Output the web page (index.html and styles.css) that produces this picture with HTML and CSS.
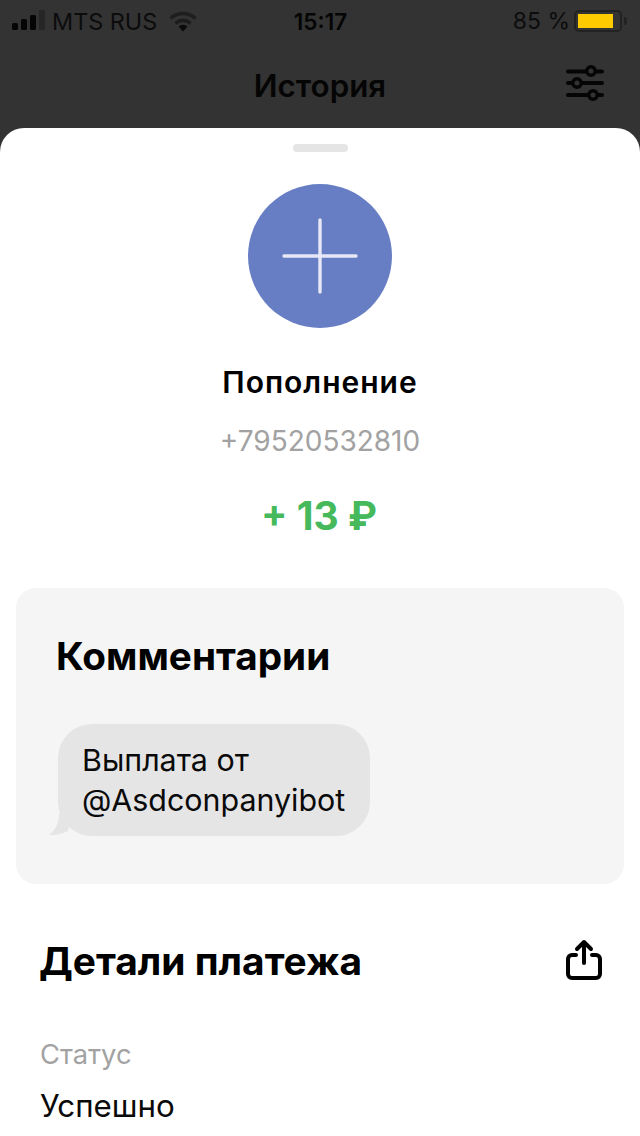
FILE: index.html
```html
<!DOCTYPE html>
<html lang="ru">
<head>
<meta charset="utf-8">
<title>История</title>
<link rel="stylesheet" href="styles.css">
</head>
<body>
<div class="screen">
  <header class="top">
    <div class="status">
      <div class="status-left">
        <svg class="signal" width="34" height="20" viewBox="0 0 34 20"><rect x="0" y="13" width="6" height="7" rx="1.500" fill="#050505"/><rect x="9" y="9" width="6" height="11" rx="1.500" fill="#050505"/><rect x="18" y="5" width="6" height="15" rx="1.500" fill="#050505"/><rect x="27" y="0" width="6" height="20" rx="1.500" fill="#262626"/></svg>
        <span class="carrier">MTS RUS</span>
        <svg class="wifi" width="28" height="21" viewBox="0 0 28 21"><path d="M1.500 7.500a18 18 0 0 1 25 0" fill="none" stroke="#1e1e1e" stroke-width="3.400"/><path d="M6.500 12.500a11 11 0 0 1 15 0" fill="none" stroke="#1c1c1c" stroke-width="3.400"/><path d="M9.500 15.500a6.500 6.500 0 0 1 9 0L14 20.500z" fill="#0a0a0a"/></svg>
      </div>
      <div class="clock">15:17</div>
      <div class="status-right">
        <span class="percent">85 %</span>
        <div class="battery"><div class="battery-fill"></div></div>
        <div class="battery-cap"></div>
      </div>
    </div>
    <div class="nav">
      <h1 class="nav-title">История</h1>
      <svg class="filter" width="38" height="36" viewBox="0 0 38 36"><g fill="none" stroke="#050505"><path d="M2 6.500h34M2 18h34M2 30h34" stroke-width="4" stroke-linecap="round"/><circle cx="25" cy="6" r="4.200" fill="#333" stroke-width="3.400"/><circle cx="11" cy="18" r="4.200" fill="#333" stroke-width="3.400"/><circle cx="27" cy="30" r="4.200" fill="#333" stroke-width="3.400"/></g></svg>
    </div>
  </header>
  <main class="sheet">
    <div class="handle"></div>
    <div class="avatar">
      <svg width="76" height="78" viewBox="0 0 76 78"><path d="M2 39h72M38 3v72" stroke="#e6e9f5" stroke-width="3.400" stroke-linecap="round"/></svg>
    </div>
    <div class="op-title">Пополнение</div>
    <div class="phone">+79520532810</div>
    <div class="amount">+ 13 ₽</div>
    <section class="comments">
      <h2 class="comments-title">Комментарии</h2>
      <div class="bubble">
        <svg class="tail" width="24" height="22" viewBox="0 0 24 22"><path d="M11 0C11 8 8 16 1 21C7 21.500 14 20 20 17L24 0z" fill="#e5e5e5"/></svg>
        <span class="bubble-text">Выплата от<br>@Asdconpanyibot</span>
      </div>
    </section>
    <section class="details">
      <div class="details-head">
        <h2 class="details-title">Детали платежа</h2>
        <svg class="share" width="38" height="44" viewBox="0 0 38 44"><g fill="none" stroke="#000" stroke-width="4" stroke-linecap="round" stroke-linejoin="round"><path d="M11 16H7A4 4 0 0 0 3 20V35A4 4 0 0 0 7 39H31A4 4 0 0 0 35 35V20A4 4 0 0 0 31 16H27"/><path d="M19 24V3M12 10L19 3L26 10"/></g></svg>
      </div>
      <div class="field-label">Статус</div>
      <div class="field-value">Успешно</div>
    </section>
  </main>
</div>
</body>
</html>
```
FILE: styles.css
```css
* { box-sizing: border-box; margin: 0; padding: 0; }
html, body { width: 640px; height: 1136px; overflow: hidden; }
body { background: #333; font-family: Inter, "Liberation Sans", sans-serif; color: #000; }
.screen { width: 640px; height: 1136px; display: flex; flex-direction: column; overflow: hidden; }
.top { height: 128px; flex: none; color: #050505; }
.status { height: 42px; padding: 0 0 0 12px; display: flex; align-items: center; justify-content: space-between; position: relative; }
.status-left { display: flex; align-items: center; gap: 7px; }
.signal { margin-top: -2px; }
.carrier { font-size: 23.400px; color: #0c0c0c; margin-right: 5px; margin-left: -1px; }
.clock { font-size: 22.500px; font-weight: 600; position: absolute; left: 1px; right: 0; text-align: center; }
.status-right { display: flex; align-items: center; padding-right: 13px; }
.percent { font-size: 23px; color: #0c0c0c; margin-right: 4px; }
.battery { width: 48px; height: 22px; border: 2px solid #222; border-radius: 5px; padding: 2px; }
.battery-fill { width: 35px; height: 14px; background: #fecb00; }
.battery-cap { width: 3px; height: 8px; background: #222; border-radius: 0 3px 3px 0; margin-left: 2px; }
.nav { height: 86px; display: flex; align-items: center; justify-content: center; position: relative; }
.nav-title { font-size: 31.300px; font-weight: 600; line-height: 36px; margin-top: 2px; }
.filter { position: absolute; right: 36px; top: 23px; }
.sheet { flex: 1; background: #fff; border-radius: 24px 24px 0 0; display: flex; flex-direction: column; align-items: center; overflow: hidden; min-height: 0; }
.handle { width: 55px; height: 8px; background: #e5e5e5; border-radius: 4px; margin-top: 16px; }
.avatar { width: 144px; height: 144px; margin-top: 32px; border-radius: 50%; background: #677ec4; display: flex; align-items: center; justify-content: center; flex: none; }
.op-title { font-size: 30px; font-weight: 600; line-height: 36px; margin-top: 36px; letter-spacing: 1px; }
.phone { font-size: 28px; color: #a2a2a2; line-height: 34px; margin-top: 24px; }
.amount { font-size: 39px; font-weight: 700; color: #45b95b; line-height: 46px; margin-top: 35px; margin-right: 2px; }
.comments { width: 608px; height: 296px; flex: none; background: #f5f5f5; border-radius: 20px; margin-top: 49px; padding: 44px 42px 0; }
.comments-title { font-size: 38.700px; font-weight: 700; line-height: 48px; margin-left: -2px; }
.bubble { position: relative; width: 312px; height: 112px; margin-top: 44px; background: #e5e5e5; border-radius: 34px; padding: 16px 24px; }
.tail { position: absolute; left: -10px; bottom: 0; }
.bubble-text { position: relative; display: block; font-size: 30.400px; line-height: 40px; color: #0a0a0a; }
.details { width: 640px; padding: 0 37px 0 40px; flex: none; }
.details-head { display: flex; justify-content: space-between; align-items: center; height: 64px; margin-top: 45px; }
.details-title { font-size: 38.900px; font-weight: 700; line-height: 48px; margin-left: -1px; }
.field-label { font-size: 27.300px; color: #a2a2a2; line-height: 32px; margin-top: 46px; }
.field-value { font-size: 31.300px; line-height: 38px; margin-top: 16px; color: #0a0a0a; }
```
